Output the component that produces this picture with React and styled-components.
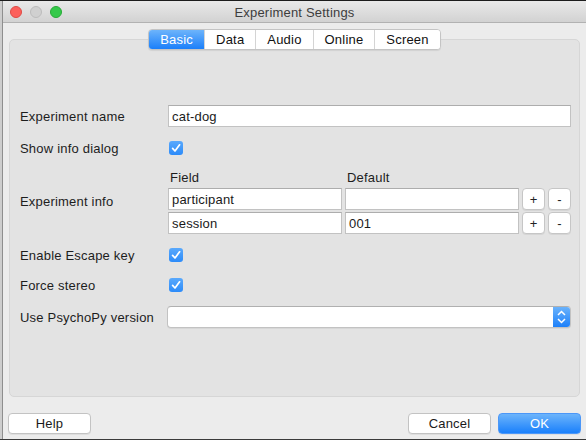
import React from "react";
import styled, { createGlobalStyle } from "styled-components";

const Global = createGlobalStyle`
  html, body { margin: 0; padding: 0; }
  body { font-family: "Liberation Sans", Arial, sans-serif; font-size: 13px; color: #1d1d1d; }
  * { box-sizing: border-box; }
`;

const Screen = styled.div`
  width: 586px;
  height: 440px;
  overflow: hidden;
  background: #cdcdcd;
  border-top: 1px solid #1c1c1c;
  border-bottom: 1px solid #3a3a3a;
  padding-left: 2px;
`;

const Window = styled.div`
  height: 438px;
  display: flex;
  flex-direction: column;
  background: #ececec;
  border-left: 1px solid #8e8e8e;
`;

const TitleBar = styled.div`
  height: 22px;
  flex: none;
  display: grid;
  grid-template-columns: 1fr auto 1fr;
  align-items: center;
  background: linear-gradient(#e9e9e9, #d2d2d2);
  border-bottom: 1px solid #b2b2b2;
`;

const Lights = styled.div`
  display: flex;
  gap: 8px;
  padding-left: 7px;
  margin-top: 1px;
`;

const Light = styled.span`
  width: 12px;
  height: 12px;
  border-radius: 50%;
  background: ${(p) => p.$bg};
  border: 1px solid ${(p) => p.$bd};
`;

const Title = styled.div`
  font-size: 13px;
  letter-spacing: 0.2px;
  color: #3d3d3d;
  margin-top: 1px;
`;

const Body = styled.div`
  flex: 1;
  display: flex;
  flex-direction: column;
`;

const TabRow = styled.div`
  display: flex;
  justify-content: center;
  padding-top: 6px;
  position: relative;
  z-index: 1;
`;

const Tabs = styled.div`
  display: flex;
  height: 21px;
  background: #fff;
  border: 1px solid #c4c4c4;
  border-radius: 4px;
  box-shadow: 0 1px 1px rgba(0, 0, 0, 0.08);
  overflow: hidden;
`;

const Tab = styled.div`
  display: flex;
  align-items: center;
  padding: 0 11px;
  letter-spacing: 0.2px;
  color: ${(p) => (p.$active ? "#fff" : "#111")};
  background: ${(p) => (p.$active ? "linear-gradient(#6db4fb, #1b7ffa)" : "#fff")};
  & + & {
    border-left: 1px solid #d4d4d4;
  }
`;

const Panel = styled.div`
  flex: 1;
  margin: -11px 6px 0 6px;
  background: #e3e3e3;
  border: 1px solid #d6d6d6;
  border-radius: 5px;
  padding: 65px 8px 0 10px;
  display: flex;
  flex-direction: column;
`;

const Row = styled.div`
  display: grid;
  grid-template-columns: 148px 1fr;
  align-items: center;
  min-height: 22px;
  margin-top: ${(p) => p.$mt || 0}px;
`;

const Label = styled.div`
  letter-spacing: 0.2px;
  color: #1d1d1d;
`;

const TextInput = styled.div`
  height: 22px;
  background: #fff;
  border: 1px solid #c2c2c2;
  border-top-color: #adadad;
  padding-left: 3px;
  display: flex;
  align-items: center;
  letter-spacing: 0.2px;
  color: #1a1a1a;
`;

const Check = styled.span`
  width: 14px;
  height: 14px;
  border-radius: 3px;
  background: linear-gradient(#5aa9fc, #2c8bf9);
  display: flex;
  align-items: center;
  justify-content: center;
  margin-left: 1px;
`;

const InfoGrid = styled.div`
  display: grid;
  grid-template-columns: 174px 1fr 23px 23px;
  grid-template-rows: 17px 22px 22px;
  column-gap: 3px;
  row-gap: 2px;
`;

const ColHead = styled.div`
  padding-left: 2px;
  letter-spacing: 0.2px;
  align-self: center;
  grid-column: ${(p) => p.$col};
`;

const SmallButton = styled.div`
  height: 22px;
  background: #fff;
  border: 1px solid #c6c6c6;
  border-radius: 4px;
  box-shadow: 0 1px 0 rgba(0, 0, 0, 0.06);
  display: flex;
  align-items: center;
  justify-content: center;
  font-size: 13px;
  color: #222;
`;

const Select = styled.div`
  height: 22px;
  margin-left: -1px;
  background: #fff;
  border: 1px solid #c2c2c2;
  border-top-color: #b0b0b0;
  border-radius: 4px;
  display: flex;
  justify-content: flex-end;
  overflow: hidden;
  box-shadow: 0 1px 0 rgba(0, 0, 0, 0.05);
`;

const Stepper = styled.div`
  width: 17px;
  background: linear-gradient(#6ab2fb, #1d80fa);
  display: flex;
  align-items: center;
  justify-content: center;
`;

const Footer = styled.div`
  display: flex;
  padding: 16px 5px 0 5px;
  height: 42px;
  gap: 7px;
`;

const Spacer = styled.div`
  flex: 1;
`;

const Button = styled.div`
  width: 83px;
  height: 21px;
  border-radius: 4px;
  display: flex;
  align-items: center;
  justify-content: center;
  letter-spacing: 0.2px;
  color: ${(p) => (p.$primary ? "#fff" : "#1a1a1a")};
  background: ${(p) => (p.$primary ? "linear-gradient(#6cb4fb, #1a80fb)" : "#fff")};
  border: 1px solid ${(p) => (p.$primary ? "#4b97f8" : "#c3c3c3")};
  box-shadow: 0 1px 0 rgba(0, 0, 0, 0.06);
`;

const Checkmark = () => (
  <svg width="14" height="14" viewBox="0 0 14 14">
    <path d="M3.6 7.4 L6 10 L10.6 3.8" fill="none" stroke="#fff" strokeWidth="1.7" strokeLinecap="round" strokeLinejoin="round" />
  </svg>
);

const Chevrons = () => (
  <svg width="17" height="20" viewBox="0 0 17 20">
    <path d="M5 8 L8.5 4.5 L12 8" fill="none" stroke="#fff" strokeWidth="1.5" />
    <path d="M5 12 L8.5 15.5 L12 12" fill="none" stroke="#fff" strokeWidth="1.5" />
  </svg>
);

const CheckRow = ({ label, mt }) => (
  <Row $mt={mt}>
    <Label>{label}</Label>
    <Check>
      <Checkmark />
    </Check>
  </Row>
);

const info = [
  { field: "participant", def: "" },
  { field: "session", def: "001" },
];

export default function App() {
  return (
    <>
      <Global />
      <Screen>
        <Window>
          <TitleBar>
            <Lights>
              <Light $bg="#fc605b" $bd="#de4a45" />
              <Light $bg="#d0d0d0" $bd="#bcbcbc" />
              <Light $bg="#35c94a" $bd="#27aa36" />
            </Lights>
            <Title>Experiment Settings</Title>
            <div />
          </TitleBar>
          <Body>
            <TabRow>
              <Tabs>
                {["Basic", "Data", "Audio", "Online", "Screen"].map((t) => (
                  <Tab key={t} $active={t === "Basic"}>
                    {t}
                  </Tab>
                ))}
              </Tabs>
            </TabRow>
            <Panel>
              <Row>
                <Label>Experiment name</Label>
                <TextInput>cat-dog</TextInput>
              </Row>
              <CheckRow label="Show info dialog" mt={10} />
              <Row $mt={10}>
                <Label>Experiment info</Label>
                <InfoGrid>
                  <ColHead $col={1}>Field</ColHead>
                  <ColHead $col="2 / 5">Default</ColHead>
                  {info.map((r) => (
                    <React.Fragment key={r.field}>
                      <TextInput>{r.field}</TextInput>
                      <TextInput>{r.def}</TextInput>
                      <SmallButton>+</SmallButton>
                      <SmallButton>-</SmallButton>
                    </React.Fragment>
                  ))}
                </InfoGrid>
              </Row>
              <CheckRow label="Enable Escape key" mt={10} />
              <CheckRow label="Force stereo" mt={8} />
              <Row $mt={10}>
                <Label>Use PsychoPy version</Label>
                <Select>
                  <Stepper>
                    <Chevrons />
                  </Stepper>
                </Select>
              </Row>
            </Panel>
            <Footer>
              <Button>Help</Button>
              <Spacer />
              <Button>Cancel</Button>
              <Button $primary>OK</Button>
            </Footer>
          </Body>
        </Window>
      </Screen>
    </>
  );
}
